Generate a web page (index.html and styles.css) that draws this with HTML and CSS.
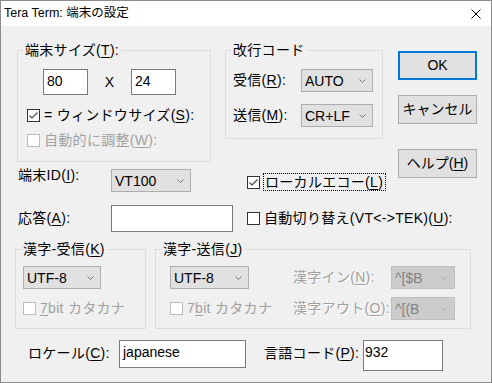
FILE: index.html
```html
<!DOCTYPE html>
<html lang="ja">
<head>
<meta charset="utf-8">
<title>Tera Term: 端末の設定</title>
<link rel="stylesheet" href="styles.css">
</head>
<body>
<div class="window">
  <div class="titlebar">
    <span class="title">Tera Term: 端末の設定</span>
    <svg class="close" width="10" height="10" viewBox="0 0 10 10"><path d="M0.5 0.5L9.5 9.5M9.5 0.5L0.5 9.5" stroke="#000" stroke-width="1" fill="none"/></svg>
  </div>
  <div class="client">
    <div class="upper">
      <div class="groups">
        <fieldset class="grp g-size">
          <legend class="lbl">端末サイズ(<u>T</u>):</legend>
          <div class="size-row">
            <div class="edit e-num">80</div>
            <span class="times">X</span>
            <div class="edit e-num">24</div>
          </div>
          <div class="chk-row r-win">
            <span class="cb"><svg width="11" height="11" viewBox="0 0 11 11"><path d="M1.5 5.5L4 8L9.5 2.5" stroke="#444" stroke-width="1.1" fill="none"/></svg></span>
            <span class="lbl">= ウィンドウサイズ(<u>S</u>):</span>
          </div>
          <div class="chk-row r-auto disabled">
            <span class="cb"></span>
            <span class="lbl">自動的に調整(<u>W</u>):</span>
          </div>
        </fieldset>
        <fieldset class="grp g-nl">
          <legend class="lbl">改行コード</legend>
          <div class="nl-row">
            <span class="nl-lbl lbl">受信(<u>R</u>):</span>
            <div class="combo c-nl"><span>AUTO</span><svg width="7" height="4" viewBox="0 0 7 4"><path d="M0.5 0.5L3.5 3.5L6.5 0.5" stroke="#777" stroke-width="1" fill="none"/></svg></div>
          </div>
          <div class="nl-row r-send">
            <span class="nl-lbl lbl">送信(<u>M</u>):</span>
            <div class="combo c-nl"><span>CR+LF</span><svg width="7" height="4" viewBox="0 0 7 4"><path d="M0.5 0.5L3.5 3.5L6.5 0.5" stroke="#777" stroke-width="1" fill="none"/></svg></div>
          </div>
        </fieldset>
      </div>
      <div class="buttons">
        <div class="btn btn-default">OK</div>
        <div class="btn btn-cancel">キャンセル</div>
        <div class="btn btn-help">ヘルプ(<u>H</u>)</div>
      </div>
      <div class="termid-row">
        <span class="row-lbl lbl-id lbl">端末ID(<u>I</u>):</span>
        <div class="combo c-id"><span>VT100</span><svg width="7" height="4" viewBox="0 0 7 4"><path d="M0.5 0.5L3.5 3.5L6.5 0.5" stroke="#777" stroke-width="1" fill="none"/></svg></div>
        <div class="chk-row r-echo">
          <span class="cb"><svg width="11" height="11" viewBox="0 0 11 11"><path d="M1.5 5.5L4 8L9.5 2.5" stroke="#444" stroke-width="1.1" fill="none"/></svg></span>
          <span class="focus lbl">ローカルエコー(<u>L</u>)</span>
        </div>
      </div>
    </div>
    <div class="answer-row">
      <span class="row-lbl lbl">応答(<u>A</u>):</span>
      <div class="edit e-answer"></div>
      <div class="chk-row r-tek">
        <span class="cb"></span>
        <span class="lbl">自動切り替え(VT&lt;-&gt;TEK)(<u>U</u>):</span>
      </div>
    </div>
    <div class="kanji">
      <fieldset class="grp g-krecv">
        <legend class="lbl">漢字-受信(<u>K</u>)</legend>
        <div class="kgrid kgrid-recv">
          <div class="combo c-utf"><span>UTF-8</span><svg width="7" height="4" viewBox="0 0 7 4"><path d="M0.5 0.5L3.5 3.5L6.5 0.5" stroke="#777" stroke-width="1" fill="none"/></svg></div>
          <div class="chk-row disabled">
            <span class="cb"></span>
            <span class="lbl"><u>7</u>bit カタカナ</span>
          </div>
        </div>
      </fieldset>
      <fieldset class="grp g-ksend">
        <legend class="lbl">漢字-送信(<u>J</u>)</legend>
        <div class="kgrid kgrid-send">
          <div class="combo c-utf"><span>UTF-8</span><svg width="7" height="4" viewBox="0 0 7 4"><path d="M0.5 0.5L3.5 3.5L6.5 0.5" stroke="#777" stroke-width="1" fill="none"/></svg></div>
          <span class="static-dis lbl">漢字イン(<u>N</u>):</span>
          <div class="combo combo-dis"><span>^[$B</span><svg width="7" height="4" viewBox="0 0 7 4"><path d="M0.5 0.5L3.5 3.5L6.5 0.5" stroke="#a8a8a8" stroke-width="1" fill="none"/></svg></div>
          <div class="chk-row disabled">
            <span class="cb"></span>
            <span class="lbl">7<u>b</u>it カタカナ</span>
          </div>
          <span class="static-dis lbl">漢字アウト(<u>O</u>):</span>
          <div class="combo combo-dis"><span>^[(B</span><svg width="7" height="4" viewBox="0 0 7 4"><path d="M0.5 0.5L3.5 3.5L6.5 0.5" stroke="#a8a8a8" stroke-width="1" fill="none"/></svg></div>
        </div>
      </fieldset>
    </div>
    <div class="locale-row">
      <span class="loc-lbl loc-lbl-1 lbl">ロケール(<u>C</u>):</span>
      <div class="edit e-locale">japanese</div>
      <span class="loc-lbl loc-lbl-2 lbl">言語コード(<u>P</u>):</span>
      <div class="edit e-code">932</div>
    </div>
  </div>
</div>
</body>
</html>
```

FILE: styles.css
```css
* { box-sizing: border-box; }
html, body { margin: 0; padding: 0; }
body {
  font-family: "Liberation Sans", "Noto Sans CJK JP", sans-serif;
  font-size: 14px;
  line-height: 15px;
  color: #000;
  background: #fff;
}
u { text-decoration: underline; text-underline-offset: 2px; }
.lbl { letter-spacing: 0.3px; }

.window {
  width: 492px;
  height: 383px;
  border: 1px solid #8c8c8c;
  background: #f0f0f0;
}
.titlebar {
  height: 25px;
  background: #fff;
  display: flex;
  align-items: center;
  justify-content: space-between;
  padding: 0 10px 0 3px;
}
.title { font-size: 12.5px; }

.client { padding-top: 17px; }

.upper {
  display: grid;
  grid-template-columns: 397px 79px;
  grid-template-areas: "groups btns" "termid btns";
  align-items: start;
}
.groups { grid-area: groups; display: flex; align-items: flex-start; }

.grp {
  margin: 0;
  border: 1px solid #dcdcdc;
  min-width: 0;
}
.grp legend { padding: 0 2px; line-height: 15px; }

.g-size { margin-left: 16px; width: 194px; padding: 11px 5px 13px 5px; }
.size-row { display: flex; align-items: center; margin-left: 20px; height: 26px; }
.times { width: 43px; text-align: center; }
.edit {
  background: #fff;
  border: 1px solid #7a7a7a;
  padding: 4px 3px 0 3px;
}
.e-num { width: 45px; height: 26px; }

.chk-row { display: flex; align-items: center; gap: 4px; height: 15px; white-space: nowrap; }
.cb {
  width: 13px; height: 13px; flex: none;
  border: 1px solid #333;
  background: #fff;
  display: flex;
}
.disabled { color: #a0a0a0; }
.disabled .cb { border-color: #bcbcbc; }
.r-win { margin: 13px 0 0 4px; }
.r-auto { margin: 10px 0 0 4px; }

.g-nl { margin-left: 14px; width: 158px; padding: 11px 5px 11px 5px; }
.nl-row { display: flex; align-items: center; margin-left: 2px; }
.nl-lbl { width: 68px; white-space: nowrap; }
.r-send { margin-top: 12px; }

.combo {
  height: 23px;
  background: #e1e1e1;
  border: 1px solid #adadad;
  display: flex;
  align-items: center;
  justify-content: space-between;
  padding: 1px 6px 0 3px;
}
.combo svg { flex: none; }
.c-nl { width: 72px; }
.c-id { width: 80px; }
.c-utf { width: 78px; }
.combo-dis {
  width: 64px;
  background: #cccccc;
  border-color: #bfbfbf;
  color: #838383;
}

.buttons { grid-area: btns; display: flex; flex-direction: column; padding-top: 8px; }
.btn {
  width: 79px; height: 29px;
  background: #e1e1e1;
  border: 1px solid #adadad;
  display: flex; align-items: center; justify-content: center;
  font-size: 14px;
  white-space: nowrap;
}
.btn-default { border: 2px solid #0078d7; }
.btn-cancel { margin-top: 15px; }
.btn-help { margin-top: 25px; }

.termid-row { grid-area: termid; display: flex; align-items: flex-start; margin-top: 7px; padding-left: 17px; }
.row-lbl { width: 93px; white-space: nowrap; }
.lbl-id { margin-top: -1px; }
.c-id { margin-right: 56px; }
.r-echo { margin-top: 4px; height: 18px; gap: 3px; }
.focus { border: 1px dotted #000; padding: 1px 2px 0 1px; height: 18px; }

.answer-row { display: flex; align-items: center; margin-top: 13px; padding-left: 17px; height: 27px; }
.e-answer { width: 122px; height: 27px; margin-right: 14px; }

.kanji { display: flex; margin-top: 10px; align-items: flex-start; }
.g-krecv { margin-left: 14px; width: 131px; padding: 9px 5px 8px 5px; }
.g-ksend { margin-left: 9px; width: 316px; padding: 9px 5px 8px 5px; }
.kgrid { display: grid; grid-template-rows: 23px 23px; row-gap: 8px; align-items: center; }
.kgrid-recv { margin-left: 2px; grid-template-columns: 78px; }
.kgrid-send { margin-left: 9px; grid-template-columns: 123px 98px 64px; }
.kgrid-send .c-utf { width: 79px; }
.static-dis { color: #a0a0a0; text-shadow: 1px 1px 0 #fff; white-space: nowrap; }

.locale-row { display: flex; align-items: flex-start; margin-top: 11px; padding-left: 27px; }
.loc-lbl { margin-top: 6px; white-space: nowrap; }
.loc-lbl-1 { width: 91px; }
.loc-lbl-2 { width: 99px; margin-left: 18px; }
.e-locale { width: 127px; height: 28px; }
.e-code { width: 80px; height: 31px; padding-left: 1px; }
```
